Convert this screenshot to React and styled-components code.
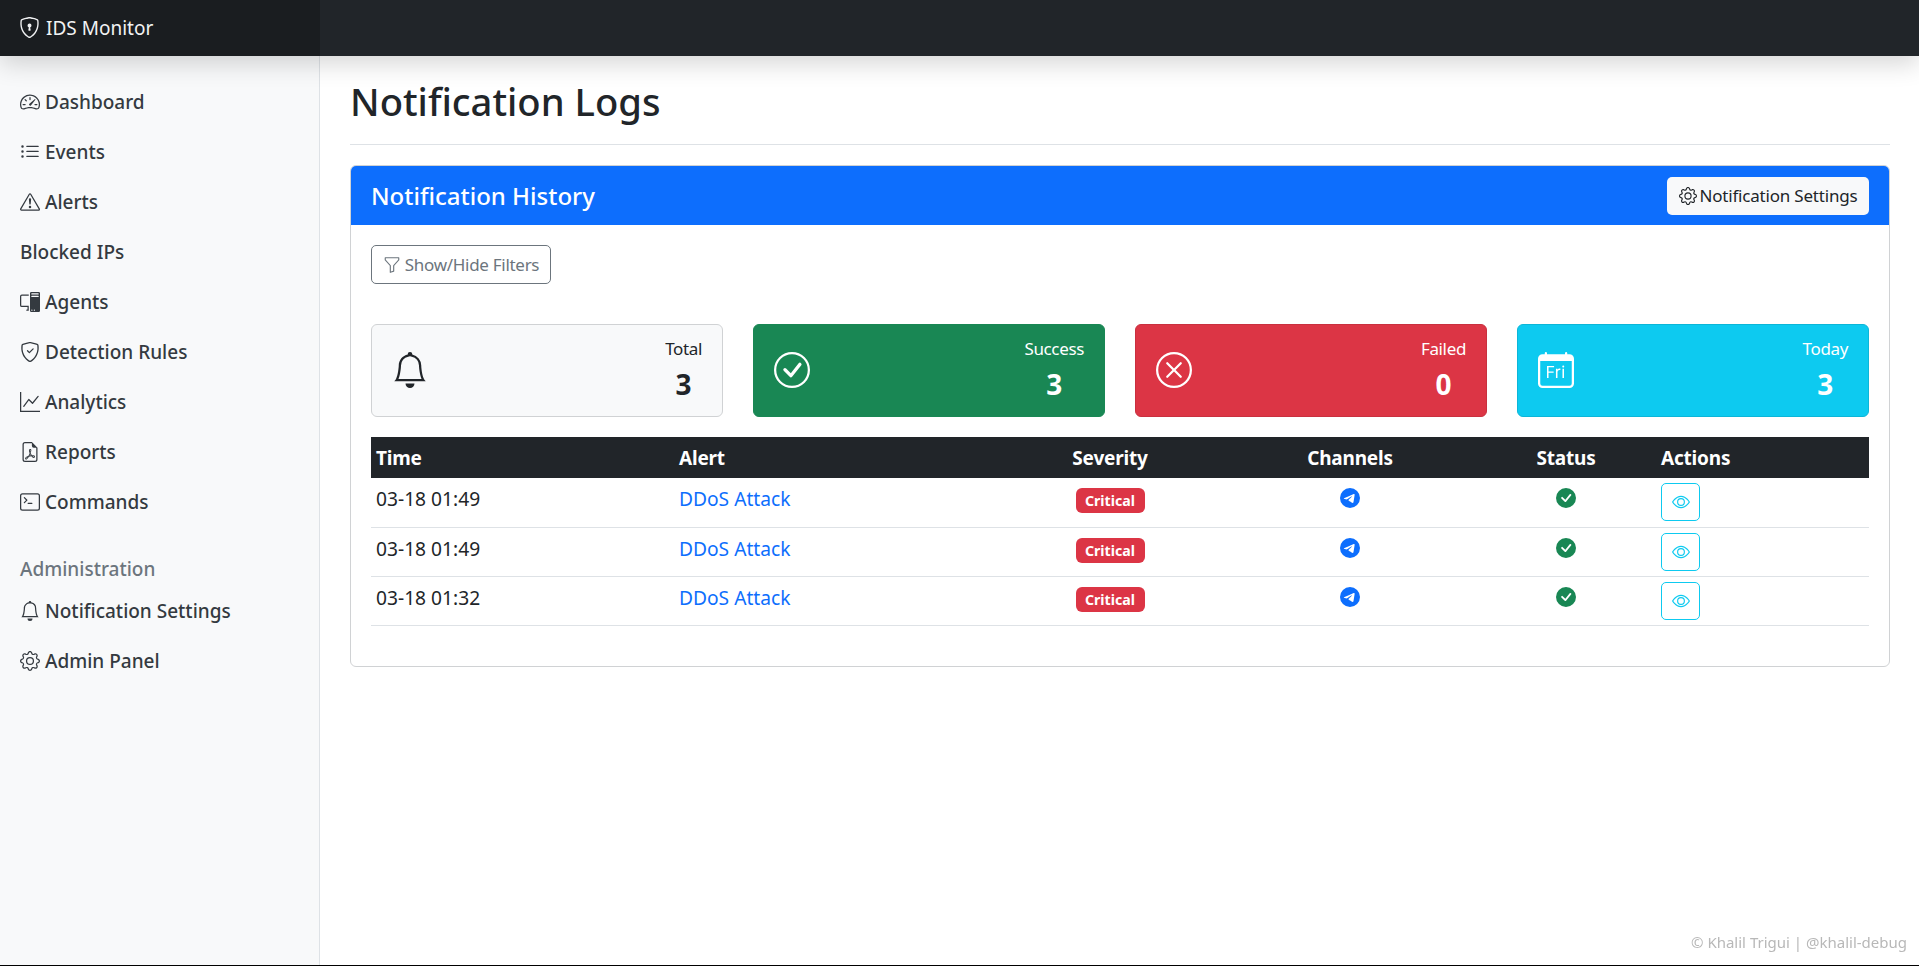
import React from "react";
import styled, { createGlobalStyle } from "styled-components";
import {
  BsShieldLock, BsSpeedometer2, BsListUl, BsExclamationTriangle, BsPcDisplay, BsShieldCheck,
  BsGraphUp, BsFileEarmarkPdf, BsTerminal, BsBell, BsGear, BsFunnel, BsCheckCircle, BsXCircle,
  BsCalendarDay, BsTelegram, BsCheckCircleFill, BsEye,
} from "react-icons/bs";

const Global = createGlobalStyle`
  html, body { margin: 0; padding: 0; background: #fff; }
  body { font-family: "Noto Sans", "Open Sans", sans-serif; color: #212529; overflow: hidden; }
  * { box-sizing: border-box; }
`;

const Shell = styled.div`
  height: 966px;
  display: flex;
  flex-direction: column;
  border-bottom: 1px solid #000;
`;
const Navbar = styled.header`
  height: 56px;
  flex: none;
  display: flex;
  background: #212529;
  box-shadow: 0 8px 24px rgba(0, 0, 0, 0.16);
  position: relative;
  z-index: 2;
`;
const Brand = styled.div`
  width: 320px;
  display: flex;
  align-items: center;
  gap: 6px;
  padding-left: 19px;
  padding-bottom: 1px;
  background: #1a1d20;
  color: #f1f2f3;
  font-size: 19px;
  svg { font-size: 21px; }
`;
const Body = styled.div`
  flex: 1;
  display: flex;
  min-height: 0;
`;
const Sidebar = styled.nav`
  width: 320px;
  flex: none;
  background: #f8f9fa;
  border-right: 1px solid #dee2e6;
  padding-top: 21px;
`;
const NavItem = styled.a`
  height: 50px;
  display: flex;
  align-items: center;
  gap: 5px;
  padding-left: 20px;
  color: #343a40;
  font-size: 19px;
  font-weight: 500;
  svg { font-size: 20px; flex: none; }
`;
const SectionLabel = styled.div`
  height: 34px;
  margin-top: 25px;
  padding-left: 20px;
  display: flex;
  align-items: center;
  color: #6c757d;
  font-size: 19px;
  font-weight: 500;
`;
const Main = styled.main`
  flex: 1;
  min-width: 0;
  padding: 0 29px 0 30px;
`;
const TitleBar = styled.div`
  height: 89px;
  display: flex;
  align-items: center;
  padding-top: 1px;
  border-bottom: 1px solid #dee2e6;
  margin-bottom: 20px;
`;
const Title = styled.h1`
  margin: 0;
  font-size: 38.2px;
  font-weight: 500;
`;
const Card = styled.section`
  border: 1px solid #d0d2d4;
  border-radius: 6px;
  height: 502px;
  overflow: hidden;
`;
const CardHeader = styled.div`
  height: 59px;
  display: flex;
  align-items: center;
  justify-content: space-between;
  padding: 0 20px;
  background: #0d6efd;
  color: #fff;
`;
const CardTitle = styled.h2`
  margin: 0;
  font-size: 24px;
  font-weight: 500;
`;
const LightButton = styled.button`
  height: 38px;
  width: 202px;
  display: flex;
  align-items: center;
  justify-content: center;
  gap: 3px;
  border: 0;
  border-radius: 5px;
  background: #f8f9fa;
  color: #212529;
  font: inherit;
  font-size: 17px;
  letter-spacing: -0.2px;
  svg { font-size: 18px; }
`;
const CardBody = styled.div`
  padding: 20px;
`;
const FilterButton = styled.button`
  height: 39px;
  width: 180px;
  display: flex;
  align-items: center;
  justify-content: center;
  gap: 4px;
  border: 1px solid #6c757d;
  border-radius: 5px;
  background: transparent;
  color: #6c757d;
  font: inherit;
  font-size: 17px;
  letter-spacing: -0.29px;
  svg { font-size: 18px; }
`;
const StatRow = styled.div`
  display: grid;
  grid-template-columns: repeat(4, 1fr);
  gap: 30px;
  margin-top: 40px;
`;
const Stat = styled.div`
  height: 93px;
  display: flex;
  align-items: center;
  justify-content: space-between;
  padding: 0 20px;
  border-radius: 6px;
  border: 1px solid ${(p) => p.$border};
  background: ${(p) => p.$bg};
  color: ${(p) => p.$fg};
  svg { font-size: 36px; flex: none; margin-top: -2px; }
`;
const StatText = styled.div`
  text-align: center;
`;
const StatLabel = styled.div`
  font-size: 17px;
  letter-spacing: -0.35px;
  line-height: 24px;
`;
const StatValue = styled.div`
  margin-top: 2px;
  font-size: 28px;
  font-weight: 700;
  line-height: 42px;
`;
const Table = styled.table`
  width: 100%;
  table-layout: fixed;
  border-collapse: collapse;
  margin-top: 20px;
`;
const Th = styled.th`
  width: ${(p) => p.$w}px;
  height: 41px;
  padding: 0 5px 0 ${(p) => p.$left || 5}px;
  background: #212529;
  color: #fff;
  font-size: 19px;
  font-weight: 700;
  letter-spacing: -0.2px;
  text-align: ${(p) => (p.$center ? "center" : "left")};
`;
const Td = styled.td`
  height: 49px;
  padding: 5px 5px 5px ${(p) => p.$left || 5}px;
  border-bottom: 1px solid #dee2e6;
  font-size: 19.2px;
  vertical-align: top;
  text-align: ${(p) => (p.$center ? "center" : "left")};
`;
const CellText = styled.div`
  padding-top: 2px;
  line-height: 27px;
`;
const AlertLink = styled.a`
  display: block;
  padding-top: 2px;
  color: #0d6efd;
  line-height: 27px;
`;
const Badge = styled.span`
  display: inline-flex;
  align-items: center;
  justify-content: center;
  width: 69px;
  height: 25px;
  margin-top: 5px;
  border-radius: 6px;
  background: #dc3545;
  color: #fff;
  font-size: 14.2px;
  font-weight: 700;
`;
const IconCell = styled.div`
  display: flex;
  justify-content: center;
  padding-top: 5px;
  color: ${(p) => p.$color};
  font-size: 20px;
`;
const EyeButton = styled.button`
  width: 39px;
  height: 38px;
  display: flex;
  align-items: center;
  justify-content: center;
  padding: 0;
  border: 1px solid #0dcaf0;
  border-radius: 5px;
  background: transparent;
  color: #0dcaf0;
  font-size: 18px;
`;
const Footer = styled.div`
  position: fixed;
  right: 12px;
  bottom: 14px;
  color: #b8b8b8;
  font-size: 15px;
`;

const nav = [
  [BsSpeedometer2, "Dashboard"], [BsListUl, "Events"], [BsExclamationTriangle, "Alerts"],
  [null, "Blocked IPs"], [BsPcDisplay, "Agents"], [BsShieldCheck, "Detection Rules"],
  [BsGraphUp, "Analytics"], [BsFileEarmarkPdf, "Reports"], [BsTerminal, "Commands"],
];
const stats = [
  { Icon: BsBell, label: "Total", value: 3, bg: "#f8f9fa", fg: "#212529", border: "#d0d2d4" },
  { Icon: BsCheckCircle, label: "Success", value: 3, bg: "#198754", fg: "#fff", border: "#198754" },
  { Icon: BsXCircle, label: "Failed", value: 0, bg: "#dc3545", fg: "#fff", border: "#c9303f" },
  { Icon: BsCalendarDay, label: "Today", value: 3, bg: "#0dcaf0", fg: "#fff", border: "#0cb6d8" },
];
const rows = ["03-18 01:49", "03-18 01:49", "03-18 01:32"];

export default function App() {
  return (
    <Shell>
      <Global />
      <Navbar>
        <Brand><BsShieldLock />IDS Monitor</Brand>
      </Navbar>
      <Body>
        <Sidebar>
          {nav.map(([Icon, label]) => (
            <NavItem key={label}>{Icon && <Icon />}{label}</NavItem>
          ))}
          <SectionLabel>Administration</SectionLabel>
          <NavItem><BsBell />Notification Settings</NavItem>
          <NavItem><BsGear />Admin Panel</NavItem>
        </Sidebar>
        <Main>
          <TitleBar><Title>Notification Logs</Title></TitleBar>
          <Card>
            <CardHeader>
              <CardTitle>Notification History</CardTitle>
              <LightButton><BsGear />Notification Settings</LightButton>
            </CardHeader>
            <CardBody>
              <FilterButton><BsFunnel />Show/Hide Filters</FilterButton>
              <StatRow>
                {stats.map(({ Icon, label, value, bg, fg, border }) => (
                  <Stat key={label} $bg={bg} $fg={fg} $border={border}>
                    <Icon />
                    <StatText>
                      <StatLabel>{label}</StatLabel>
                      <StatValue>{value}</StatValue>
                    </StatText>
                  </Stat>
                ))}
              </StatRow>
              <Table>
                <thead>
                  <tr>
                    <Th $w={303}>Time</Th>
                    <Th $w={320}>Alert</Th>
                    <Th $w={232} $center>Severity</Th>
                    <Th $w={248} $center>Channels</Th>
                    <Th $w={182} $center $left={7}>Status</Th>
                    <Th $w={213}>Actions</Th>
                  </tr>
                </thead>
                <tbody>
                  {rows.map((time, i) => (
                    <tr key={i}>
                      <Td><CellText>{time}</CellText></Td>
                      <Td><AlertLink>DDoS Attack</AlertLink></Td>
                      <Td $center><Badge>Critical</Badge></Td>
                      <Td $center><IconCell $color="#0d6efd"><BsTelegram /></IconCell></Td>
                      <Td $center $left={7}><IconCell $color="#198754"><BsCheckCircleFill /></IconCell></Td>
                      <Td><EyeButton><BsEye /></EyeButton></Td>
                    </tr>
                  ))}
                </tbody>
              </Table>
            </CardBody>
          </Card>
        </Main>
      </Body>
      <Footer>© Khalil Trigui | @khalil-debug</Footer>
    </Shell>
  );
}
